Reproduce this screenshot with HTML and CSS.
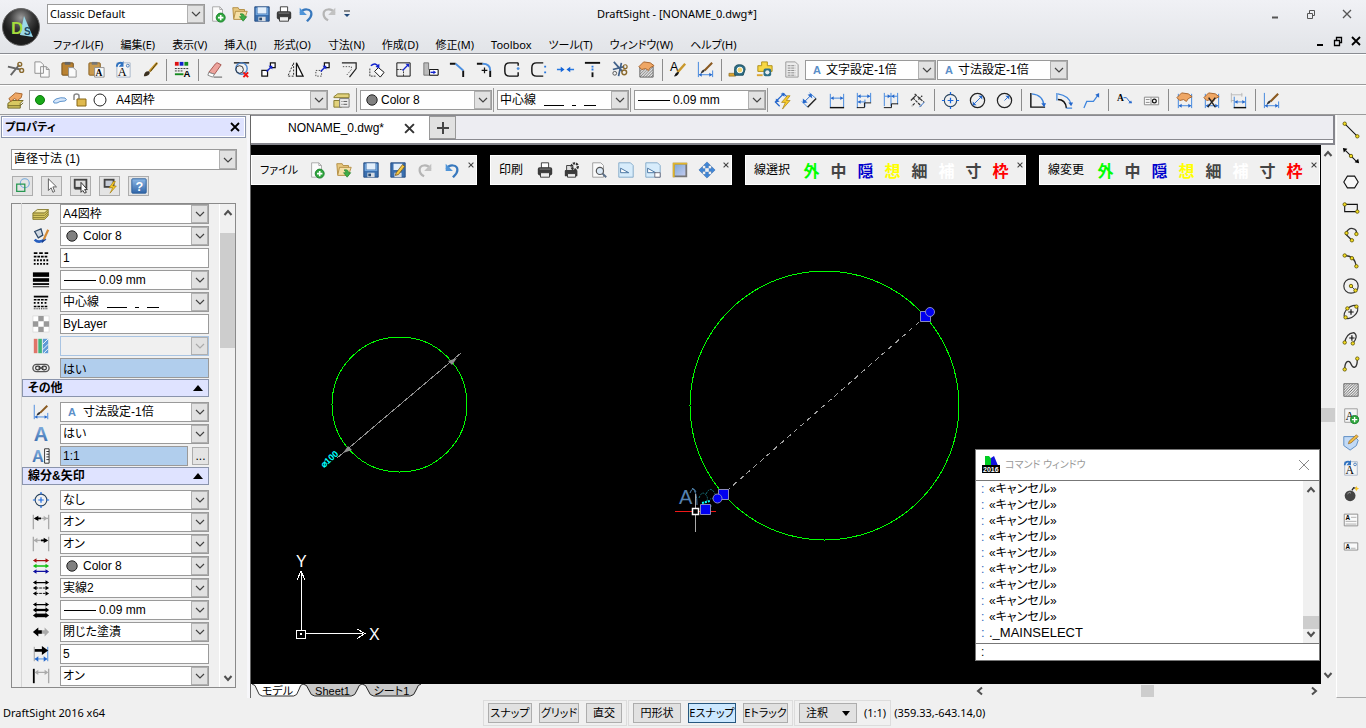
FILE: index.html
```html
<!DOCTYPE html>
<html lang="ja">
<head>
<meta charset="utf-8">
<title>DraftSight</title>
<link rel="stylesheet" href="styles.css">
</head>
<body>
<svg class="defs" aria-hidden="true">
<defs>
<linearGradient id="g-blue" x2="0" y2="1"><stop stop-color="#8db8e6"/><stop offset="1" stop-color="#3065a8"/></linearGradient>
<linearGradient id="g-steel" x2="1" y2="1"><stop stop-color="#7ba6d6"/><stop offset="1" stop-color="#c6cdf0"/></linearGradient>
<radialGradient id="g-orb" cy=".25"><stop stop-color="#9a9a9a"/><stop offset=".6" stop-color="#3c3c3c"/><stop offset="1" stop-color="#1c1c1c"/></radialGradient>
<pattern id="p-hatch" width="3" height="3" patternUnits="userSpaceOnUse"><path d="M0 3L3 0" stroke="#333" stroke-width=".8"/></pattern>
</defs>
<symbol id="chev" viewBox="0 0 10 10"><path d="M1 3l4 4 4-4" fill="none" stroke="currentColor" stroke-width="1.2"/></symbol>
<symbol id="chevb" viewBox="0 0 10 10"><path d="M1.500 3l3.500 4 3.500-4" fill="none" stroke="#505050" stroke-width="2"/></symbol>
<symbol id="x" viewBox="0 0 10 10"><path d="M1 1l8 8M9 1L1 9" fill="none" stroke="currentColor" stroke-width="1.800"/></symbol>
<symbol id="new" viewBox="0 0 20 20"><path d="M4 2h8l3 3v13H4z" fill="#fbfbfb" stroke="#a5a5a5"/><path d="M12 2v3h3" fill="none" stroke="#a5a5a5"/><circle cx="13" cy="14" r="5" fill="#2fa63c" stroke="#16802a"/><path d="M10 14h6M13 11v6" stroke="#fff" stroke-width="1.800"/></symbol>
<symbol id="open" viewBox="0 0 20 20"><path d="M2 3h6l1 2h6v10H3z" fill="#e8c981" stroke="#b08a3e"/><path d="M5 7h13l-3 9H3z" fill="#f5dfa6" stroke="#b08a3e"/><path d="M10 10c4-1 5 1 5 3h2.500l-4 5-4-5H12c0-1-1-2-2-3z" fill="#3fae48" stroke="#1c7d28" stroke-width=".7"/></symbol>
<symbol id="save" viewBox="0 0 20 20"><path d="M2 2h16v16H2z" fill="#3a6fae" stroke="#224a80"/><path d="M5 2.500h10v7H5z" fill="#e3effb"/><path d="M3 3h1.500v7h11V3H17v8H3z" fill="#6fa3da"/><path d="M6 13h8v5H6z" fill="#d5dbe2"/><path d="M7 14h3v3H7z" fill="#27486f"/></symbol>
<symbol id="saveas" viewBox="0 0 20 20"><path d="M2 2h16v16H2z" fill="#3a6fae" stroke="#224a80"/><path d="M5 3h10v7H5z" fill="#e3effb"/><path d="M6 13h8v5H6z" fill="#d5dbe2"/><path d="M7 16l1-3 7-9 2.500 2-7 9z" fill="#f2c744" stroke="#6b4a12" stroke-width=".8"/></symbol>
<symbol id="print" viewBox="0 0 20 20"><path d="M6 2h8v6H6z" fill="#fff" stroke="#333"/><rect x="2" y="7" width="16" height="9" rx="2" fill="#3b3b3b"/><path d="M5 13h10v5H5z" fill="#eee" stroke="#333"/><path d="M4 9h12" stroke="#888"/></symbol>
<symbol id="printset" viewBox="0 0 20 20"><path d="M4 5h7v6H4z" fill="#ddd" stroke="#333"/><rect x="2" y="10" width="14" height="7" rx="1" fill="#3b3b3b"/><path d="M5 14h9v4H5z" fill="#eee" stroke="#333"/><circle cx="13" cy="6" r="3.500" fill="none" stroke="#333" stroke-width="2.500" stroke-dasharray="2.500 1"/></symbol>
<symbol id="undo" viewBox="0 0 20 20"><path d="M4 9C7 3 16 4 16 10c0 4-3 6-5 8" fill="none" stroke="#3878bd" stroke-width="2.500"/><path d="M3 3v8h8z" fill="#4f94d8"/></symbol>
<symbol id="redo" viewBox="0 0 20 20"><path d="M16 9C13 3 4 4 4 10c0 4 3 6 5 7" fill="none" stroke="#b5b5b5" stroke-width="2.500"/><path d="M17 3v8H9z" fill="#c2c2c2"/></symbol>
<symbol id="cut" viewBox="0 0 20 20"><path d="M2 7l13 3M5 16L14 5" stroke="#666" stroke-width="2"/><circle cx="14.500" cy="4.500" r="2" fill="none" stroke="#8a6a2e" stroke-width="1.500"/><circle cx="16.500" cy="11" r="2" fill="none" stroke="#8a6a2e" stroke-width="1.500"/></symbol>
<symbol id="scissors" viewBox="0 0 20 20"><path d="M4 2l9 10M3 10l12-3M9 17L12 3" stroke="#41618a" stroke-width="1.800"/><circle cx="15" cy="13" r="2.500" fill="none" stroke="#8a6a2e" stroke-width="1.500"/><circle cx="16" cy="7" r="2" fill="none" stroke="#8a6a2e" stroke-width="1.300"/><circle cx="5" cy="14" r="2" fill="none" stroke="#555"/></symbol>
<symbol id="copy" viewBox="0 0 20 20"><path d="M2 2h6l3 3v9H2zM8 7h6l3 3v8H8z" fill="#fafafa" stroke="#8f8f8f"/><path d="M14 7v3h3" fill="none" stroke="#8f8f8f"/></symbol>
<symbol id="paste" viewBox="0 0 20 20"><rect x="2" y="3" width="12" height="13" rx="1" fill="#b98232" stroke="#75501b"/><path d="M5 2h6v3H5z" fill="#666"/><path d="M9 8h5l3 3v7H9z" fill="#fafafa" stroke="#8f8f8f"/></symbol>
<symbol id="pastea" viewBox="0 0 20 20"><rect x="2" y="3" width="12" height="13" rx="1" fill="#c99a4e" stroke="#8a6224"/><path d="M5 2h6v3H5z" fill="#777"/><path d="M8 8h10v10H8z" fill="#fafafa" stroke="#8f8f8f"/><text x="9" y="17" font-family="Liberation Serif" font-weight="bold" font-size="10">A</text></symbol>
<symbol id="atext" viewBox="0 0 20 20"><path d="M3 3h14v15H3z" fill="#f5f5f5" stroke="#a8b6c8"/><text x="4" y="17" font-family="Liberation Serif" font-size="13">A</text><circle cx="14.500" cy="6" r="1.500" fill="none" stroke="#4479b8"/><path d="M3 7c0-4 4-5 6-3" fill="none" stroke="#2f72c0" stroke-width="2"/><path d="M10 1v6H5z" fill="#2f72c0"/></symbol>
<symbol id="aplus" viewBox="0 0 20 20"><path d="M3 2h14v15H3z" fill="#f5f5f5" stroke="#999"/><text x="4" y="14" font-family="Liberation Serif" font-size="13">A</text><circle cx="14" cy="14" r="4.500" fill="#2fa63c" stroke="#16802a"/><path d="M11 14h6M14 11v6" stroke="#fff" stroke-width="1.500"/></symbol>
<symbol id="brush" viewBox="0 0 20 20"><path d="M17 3L9 12" stroke="#c9982b" stroke-width="2.500"/><path d="M17 3L10 12" stroke="#443510" stroke-width="1"/><path d="M3 17c0-4 3-6 6-5 1 3-2 5-6 5z" fill="#3a3020"/></symbol>
<symbol id="palette" viewBox="0 0 20 20"><path d="M2 2h4v4H2z" fill="#d11"/><path d="M7 2h4v4H7z" fill="#12c"/><path d="M12 2h4v4h-4z" fill="#138a1e"/><path d="M2 9h15M2 11.500h9" stroke="#333" stroke-dasharray="2 1"/><path d="M2 15h9" stroke="#138a1e" stroke-width="2"/><text x="11" y="18" font-family="Liberation Sans" font-weight="bold" font-size="10">A</text></symbol>
<symbol id="eraser" viewBox="0 0 20 20"><path d="M4 13L11 4q1-1 2-1l4 2-7 10z" fill="#eda39c" stroke="#a5564f"/><path d="M4 13l6 2-2 3-5-2z" fill="#fff" stroke="#888"/><path d="M9 18h9" stroke="#555"/></symbol>
<symbol id="trimx" viewBox="0 0 20 20"><path d="M2 3h16" stroke="#222" stroke-width="1.500"/><circle cx="10" cy="9" r="6" fill="none" stroke="#4b86d0" stroke-width="1.500"/><circle cx="8" cy="10" r="4" fill="none" stroke="#333"/><path d="M12 13l5 5M17 13l-5 5" stroke="#e11" stroke-width="2"/></symbol>
<symbol id="cpent" viewBox="0 0 20 20"><path d="M3 11h6v6H3zM12 3h5v5h-5z" fill="#fff" stroke="#111" stroke-width="1.300"/><path d="M8 12l5-5" stroke="#12c" stroke-width="1.500"/><path d="M14 6v4l-4-4z" fill="#12c"/></symbol>
<symbol id="mirror" viewBox="0 0 20 20"><path d="M8 3v14H2z" fill="none" stroke="#222" stroke-dasharray="2 1.500"/><path d="M11 3v14h7z" fill="#fff" stroke="#111" stroke-width="1.300"/></symbol>
<symbol id="move" viewBox="0 0 20 20"><path d="M3 11h6v6H3z" fill="none" stroke="#444" stroke-dasharray="1.500 1.500"/><path d="M12 3h5v5h-5z" fill="#fff" stroke="#111" stroke-width="1.300"/><path d="M8 12l5-5" stroke="#12c" stroke-width="1.500"/><path d="M14 6v4l-4-4z" fill="#12c"/></symbol>
<symbol id="offset" viewBox="0 0 20 20"><path d="M2 3h15v6l-7 9" fill="none" stroke="#222" stroke-width="1.300"/><path d="M3 7h9v3l-5 6" fill="none" stroke="#555" stroke-dasharray="1.500 1.500"/></symbol>
<symbol id="rotate" viewBox="0 0 20 20"><path d="M3 9v8h7" fill="none" stroke="#333" stroke-dasharray="2 1"/><path d="M8 12l4-4 6 5-4 5z" fill="#fff" stroke="#111"/><path d="M4 6q5-4 8 1" fill="none" stroke="#12c" stroke-width="1.500"/><path d="M13 9V4l-4 3z" fill="#12c"/></symbol>
<symbol id="scale" viewBox="0 0 20 20"><path d="M3 3h14v14H3z" fill="none" stroke="#111"/><path d="M3 10h7v7" fill="none" stroke="#333" stroke-dasharray="2 1"/><path d="M9 11l6-6" stroke="#12c" stroke-width="1.300"/><path d="M16 4v4l-4-4z" fill="#12c"/></symbol>
<symbol id="stretch" viewBox="0 0 20 20"><path d="M3 3h5v7h10v6H3z" fill="#bbb" stroke="#777"/><path d="M9 10h9v6H9z" fill="#fff" stroke="#111"/><path d="M10 13h4" stroke="#12c" stroke-width="1.500"/><path d="M13 11l3 2-3 2z" fill="#12c"/></symbol>
<symbol id="chamfer" viewBox="0 0 20 20"><path d="M2 4h6M16 11v7" stroke="#111" stroke-width="2"/><path d="M8 4l8 7" stroke="#4b8fe0" stroke-width="2"/></symbol>
<symbol id="fillet" viewBox="0 0 20 20"><path d="M2 4h6M16 11v7" stroke="#111" stroke-width="2"/><path d="M8 4q8 0 8 7" fill="none" stroke="#4b8fe0" stroke-width="2"/><path d="M7 11h6M10 8v6" stroke="#111" stroke-width="1.300"/></symbol>
<symbol id="split1" viewBox="0 0 20 20"><path d="M17 3H8Q3 3 3 8v4q0 5 5 5h9M17 13v4M17 3v3" fill="none" stroke="#111" stroke-width="1.500"/><circle cx="17" cy="9" r="1.500" fill="#4b8fe0"/></symbol>
<symbol id="split2" viewBox="0 0 20 20"><path d="M15 3H8Q3 3 3 8v4q0 5 5 5h7" fill="none" stroke="#111" stroke-width="1.500"/><path d="M16 6h2v2h-2zM16 12h2v2h-2z" fill="#2879e0"/></symbol>
<symbol id="join" viewBox="0 0 20 20"><path d="M1 10h5M14 10h5" stroke="#2879e0" stroke-width="1.500"/><path d="M5 7l4 3-4 3zM15 7l-4 3 4 3z" fill="#1465d8"/></symbol>
<symbol id="extend" viewBox="0 0 20 20"><path d="M2 3h16" stroke="#111" stroke-width="2"/><path d="M10 6v6" stroke="#2879e0" stroke-width="2" stroke-dasharray="2 1"/><path d="M10 13v5" stroke="#111" stroke-width="2"/></symbol>
<symbol id="hand" viewBox="0 0 20 20"><path d="M2 7l5-5 7 1 4 3-4 2-2 3-3-2-4 1z" fill="#efa765" stroke="#a8642b"/></symbol>
<symbol id="hatched" viewBox="0 0 20 20"><path d="M3 7h14v11H3z" fill="url(#p-hatch)" stroke="#666"/><use href="#hand"/></symbol>
<symbol id="hatch" viewBox="0 0 20 20"><path d="M2 3h16v14H2z" fill="url(#p-hatch)" stroke="#666"/></symbol>
<symbol id="abrush" viewBox="0 0 20 20"><text x="1" y="12" font-family="Liberation Sans" font-size="13">A</text><path d="M17 4L9 13" stroke="#c9982b" stroke-width="2.500"/><path d="M6 17q1-4 4-4 0 3-4 4z" stroke="#222"/></symbol>
<symbol id="dimbrush" viewBox="0 0 20 20"><path d="M2.500 2v16M17.500 11v7M3 15.500h14" stroke="#3e85dd"/><path d="M3 15.500l3-2v4zM17 15.500l-3-2v4z" fill="#2668cc"/><path d="M17 3l-8 8" stroke="#8a5a20" stroke-width="2.200"/><path d="M5 14q1-4 4-4 1 3-4 4z" fill="#333"/></symbol>
<symbol id="tape" viewBox="0 0 20 20"><path d="M1 14h7v3H1z" fill="#dca530" stroke="#7a5a10" stroke-width=".6"/><path d="M7 16V9q0-4 5-4 6 0 6 5l-2 6z" fill="#2e6f86" stroke="#1c4d60"/><circle cx="12.500" cy="10.500" r="3" fill="#f1d472" stroke="#fff"/></symbol>
<symbol id="tapey" viewBox="0 0 20 20"><path d="M7 2h6v4h5v6H3V6h4z" fill="#f7d744" stroke="#af8e17"/><path d="M2 15h6v2H2z" fill="#dca530"/><rect x="9" y="9" width="8" height="8" rx="2" fill="#2e6f86"/><circle cx="13" cy="13" r="2.200" fill="#e8edf0"/></symbol>
<symbol id="list" viewBox="0 0 20 20"><path d="M4 2h10l3 3v13H4z" fill="#ececec" stroke="#999"/><path d="M6 6h8M6 8.500h8M6 11h8M6 13.500h8M6 16h8" stroke="#888" stroke-dasharray="3 .7"/></symbol>
<symbol id="layers" viewBox="0 0 20 20"><path d="M1 9l5-4h12l-4 4z" fill="#f1e8a4" stroke="#857a2f"/><path d="M1 9h13l4-4v7l-4 4H1z" fill="#d8c861" stroke="#857a2f"/><path d="M1 11.500h13l4-4M1 14h13l4-4" fill="none" stroke="#857a2f"/></symbol>
<symbol id="layerhand" viewBox="0 0 20 20"><path d="M2 13l4-3h12l-3 3v5H2z" fill="#d8c861" stroke="#6f6524"/><path d="M2 15.500h13l3-3" fill="none" stroke="#6f6524"/><path d="M3 8l7-6 7 1-1 4-4 3-3-2-4 3z" fill="#efa765" stroke="#a8642b"/></symbol>
<symbol id="layerlist" viewBox="0 0 20 20"><path d="M2 6l4-3h12v4H2zM2 10h8v7H2z" fill="#e2d27c" stroke="#857a2f"/><path d="M8 8h10v9H8z" fill="#eee" stroke="#777"/><path d="M10 11h1M12 11h4M10 14h1M12 14h4" stroke="#555"/></symbol>
<symbol id="cloud" viewBox="0 0 16 16"><path d="M2 11q-2-2 2-4 5-2 9-1 3 2 0 3-6 0-8 2z" fill="#d5e6fa" stroke="#5f94cc"/></symbol>
<symbol id="lock" viewBox="0 0 16 16"><path d="M2 8V4q0-2 2.500-2T7 4v3" fill="none" stroke="#888" stroke-width="1.500"/><path d="M5 7h9v7H5z" fill="#dfb94e" stroke="#876616"/></symbol>
<symbol id="dimfast" viewBox="0 0 20 20"><path d="M2 11l5 5M10 2l6 5M3 11L11 3" stroke="#2668cc" stroke-width="1.300" fill="none"/><path d="M12 2l0 4-4-3zM3 12V8l4 3z" fill="#2668cc"/><path d="M15 5l-6 7h4l-3 7 8-9h-4l4-5z" fill="#f8cc2c" stroke="#a37a0a" stroke-width=".7"/></symbol>
<symbol id="dimal" viewBox="0 0 20 20"><path d="M2 11l6 6M10 2l7 6" stroke="#3e85dd"/><path d="M4 12l8-8" stroke="#2668cc"/><path d="M12 3l1 5-5-4zM3 13V8l5 4z" fill="#2668cc"/><path d="M8 17l9-9" stroke="#222" stroke-width="1.500"/></symbol>
<symbol id="dimlin" viewBox="0 0 20 20"><path d="M3.500 3v14M17.500 3v14M4 7.500h13" stroke="#3e85dd"/><path d="M4 7.500l3-2v4zM17 7.500l-3-2v4z" fill="#2668cc"/><path d="M3 17.500h15" stroke="#111" stroke-width="1.500"/></symbol>
<symbol id="dimbase" viewBox="0 0 20 20"><path d="M3.500 2v16M17.500 2v10M11.500 9v8M4 5.500h13M4 11.500h7" stroke="#3e85dd"/><path d="M4 5.500l3-2v4zM17 5.500l-3-2v4zM4 11.500l3-2v4z" fill="#2668cc"/><path d="M3 17.500h8v-5h7" fill="none" stroke="#111"/></symbol>
<symbol id="dimcont" viewBox="0 0 20 20"><path d="M3.500 2v14M10.500 2v14M17.500 2v12M4 5.500h13" stroke="#3e85dd"/><path d="M10 5.500l-3-2v4zM11 5.500l3-2v4z" fill="#2668cc"/><path d="M3 17.500h8v-4h7" fill="none" stroke="#111"/></symbol>
<symbol id="dimord" viewBox="0 0 20 20"><path d="M3 10l6-6M7 3l10 9M5 7l9 9M11 9l4-4M7 13l-3 3" stroke="#333" stroke-width="1.300" stroke-dasharray="3 1"/><path d="M12 17l5-5" stroke="#2668cc"/></symbol>
<symbol id="center" viewBox="0 0 20 20"><circle cx="10" cy="10" r="6.500" fill="none" stroke="#29445f" stroke-width="1.200"/><path d="M7 10h6M10 7v6M1 10h3M16 10h3M10 1v3M10 16v3" stroke="#1868e0" stroke-width="1.300"/></symbol>
<symbol id="dimdia" viewBox="0 0 20 20"><circle cx="10" cy="10" r="7.500" fill="none" stroke="#222" stroke-width="1.300"/><path d="M5 15L15 5" stroke="#2668cc"/><path d="M15 5v4l-4-4zM5 15v-4l4 4z" fill="#2668cc"/></symbol>
<symbol id="dimrad" viewBox="0 0 20 20"><circle cx="10" cy="10" r="7.500" fill="none" stroke="#222" stroke-width="1.300"/><path d="M10 10l5-5" stroke="#2668cc"/><path d="M15 5v4l-4-4z" fill="#2668cc"/></symbol>
<symbol id="dimang" viewBox="0 0 20 20"><path d="M3 2v15h15" fill="none" stroke="#111" stroke-width="1.500"/><path d="M4 3q12 1 13 13" fill="none" stroke="#3e85dd" stroke-width="1.400"/><path d="M17 17l-3-4h5z" fill="#2668cc"/></symbol>
<symbol id="dimarc" viewBox="0 0 20 20"><path d="M3 9q8 0 9 9" fill="none" stroke="#111" stroke-width="1.500"/><path d="M3 3q12 2 14 11M2 2v8M12 18h6" fill="none" stroke="#3e85dd" stroke-width="1.300"/><path d="M17 16l-3-4h5z" fill="#2668cc"/></symbol>
<symbol id="dimjog" viewBox="0 0 20 20"><path d="M2 18l3-7h7l5-7" fill="none" stroke="#3e85dd" stroke-width="1.300"/><path d="M18 2v5l-4-3z" fill="#2668cc"/></symbol>
<symbol id="leader" viewBox="0 0 20 20"><text x="2" y="11" font-family="Liberation Serif" font-weight="bold" font-size="10">A</text><path d="M9 7h3l4 5" fill="none" stroke="#2668cc"/><path d="M18 13l-4 0 3-3z" fill="#2668cc"/></symbol>
<symbol id="tol" viewBox="0 0 20 20"><path d="M2.500 6.500h15v8h-15z" fill="#fafafa" stroke="#888"/><path d="M4 9h4M4 12h4M9.500 7v7" stroke="#888"/><circle cx="13" cy="10.500" r="2" fill="none" stroke="#111" stroke-width="1.300"/></symbol>
<symbol id="dimhand" viewBox="0 0 20 20"><path d="M3.500 3v15M17.500 3v15M4 15.500h13" stroke="#3e85dd"/><path d="M4 15.500l3-2v4zM17 15.500l-3-2v4z" fill="#2668cc"/><use href="#hand"/></symbol>
<symbol id="dimhandx" viewBox="0 0 20 20"><use href="#dimhand"/><path d="M7 7l7 10M14 7L6 17" stroke="#222" stroke-width="1.500"/></symbol>
<symbol id="dimobl" viewBox="0 0 20 20"><path d="M2.500 2v10M13.500 2v4M2 4h12M2 10h4" stroke="#bbb"/><path d="M5.500 6v12M17.500 6v12M6 11.500h11" stroke="#3e85dd"/><path d="M6 11.500l3-2v4zM17 11.500l-3-2v4z" fill="#2668cc"/><path d="M5 17.500h13" stroke="#111" stroke-width="1.500"/></symbol>
<symbol id="preview" viewBox="0 0 20 20"><path d="M3 2h9l3 3v13H3z" fill="#fafafa" stroke="#999"/><circle cx="11" cy="11" r="4" fill="#dbe9f6" stroke="#555" stroke-width="1.300"/><path d="M14 14l4 4" stroke="#5a6f88" stroke-width="2.200"/></symbol>
<symbol id="sheet" viewBox="0 0 20 20"><path d="M2 2h13l3 3v13H2z" fill="#d7ecfb" stroke="#7fa7c7"/><path d="M4 8v5h9z" fill="#fff" stroke="#3b6a9a"/></symbol>
<symbol id="sheet2" viewBox="0 0 20 20"><use href="#sheet"/><path d="M12 13h6v5h-6z" fill="#fff" stroke="#667"/></symbol>
<symbol id="frame" viewBox="0 0 20 20"><path d="M3 3h14v14H3z" fill="url(#g-steel)" stroke="#777" stroke-width="2"/><path d="M3 18V3h15" fill="none" stroke="#e2b62a" stroke-width="2"/></symbol>
<symbol id="pan" viewBox="0 0 20 20"><path d="M10 1l4 4h-2.500v3.500H15V6l4 4-4 4v-2.500h-3.500V15H14l-4 4-4-4h2.500v-3.500H5V14l-4-4 4-4v2.500h3.500V5H6z" fill="#3f87d8" stroke="#21589c" stroke-width=".5"/><path d="M8 8h4v4H8z" fill="#f0f0f0"/></symbol>
<symbol id="shapes" viewBox="0 0 20 20"><circle cx="12" cy="7" r="5" fill="none" stroke="#73a9dd" stroke-width="1.200"/><path d="M3 8h9v8H3z" fill="none" stroke="#279751" stroke-width="1.400"/></symbol>
<symbol id="cursor" viewBox="0 0 20 20"><path d="M6 2v13l3-3 2 5 2-1-2-5h4z" fill="#fff" stroke="#555"/></symbol>
<symbol id="selset" viewBox="0 0 20 20"><rect x="3" y="3" width="13" height="9" fill="#ddd" stroke="#444" stroke-width="2"/><path d="M3 13h7" stroke="#444" stroke-width="2"/><path d="M10 6v11l2-2 2 3 2-1-2-3h3z" fill="#fff" stroke="#222"/></symbol>
<symbol id="selfast" viewBox="0 0 20 20"><rect x="4" y="3" width="10" height="8" fill="#c5cbd6" stroke="#444" stroke-width="2"/><path d="M14 5l-5 7h4l-3 6 7-8h-4l3-5z" fill="#f8cc2c" stroke="#a37a0a" stroke-width=".7"/></symbol>
<symbol id="help" viewBox="0 0 20 20"><rect x="2" y="2" width="16" height="16" rx="1" fill="url(#g-blue)" stroke="#2b5e9a"/><text x="6" y="15" fill="#fff" font-family="Liberation Sans" font-weight="bold" font-size="14">?</text></symbol>
<symbol id="paint" viewBox="0 0 20 20"><path d="M3 5l7-3 2 7-5 3z" fill="#cfd8e2" stroke="#2f4968" stroke-width="1.400"/><path d="M3 14q5 5 12-1" fill="none" stroke="#265ebf" stroke-width="3"/><path d="M18 3l-5 11" stroke="#d58b36" stroke-width="2.500"/><path d="M11 15l4-1-4 4z" fill="#183e8c"/></symbol>
<symbol id="ltscale" viewBox="0 0 20 20"><path d="M2 4.500h16" stroke="#000" stroke-width="2" stroke-dasharray="4 2"/><path d="M2 8.500h16" stroke="#000" stroke-width="2" stroke-dasharray="3 1"/><path d="M2 12.500h16M2 16.500h16" stroke="#000" stroke-width="2" stroke-dasharray="2 1.500"/></symbol>
<symbol id="weight" viewBox="0 0 20 20"><path d="M1 4h18" stroke="#000" stroke-width="5"/><path d="M1 10h18" stroke="#000" stroke-width="4"/><path d="M1 14.500h18" stroke="#000" stroke-width="2"/><path d="M1 17.500h18" stroke="#000"/></symbol>
<symbol id="ltype" viewBox="0 0 20 20"><path d="M2 4h16" stroke="#000" stroke-width="2"/><path d="M2 7.500h16M2 15h16" stroke="#000" stroke-width="1.500" stroke-dasharray="3 1"/><path d="M2 11h16" stroke="#000" stroke-width="2" stroke-dasharray="2 2"/><path d="M2 17.500h16" stroke="#000" stroke-dasharray="1 1"/></symbol>
<symbol id="checker" viewBox="0 0 20 20"><path d="M1 1h18v18H1z" fill="#fff" stroke="#ddd"/><path d="M7 1h6v6H7zM1 7h6v6H1zM13 7h6v6h-6zM7 13h6v6H7z" fill="#999"/></symbol>
<symbol id="bars" viewBox="0 0 20 20"><path d="M2 2h4v16H2z" fill="#e07569"/><path d="M7 2h4v16H7z" fill="#42b57a"/><path d="M12 2h6v16h-6z" fill="#5f9cd7"/><path d="M12 8l6-6M12 14l6-6M13 18l5-5" stroke="#fff"/></symbol>
<symbol id="link" viewBox="0 0 20 20"><rect x="1" y="6" width="18" height="8" rx="4" fill="#eee" stroke="#555" stroke-width="1.500"/><rect x="4" y="8" width="5" height="4" rx="2" fill="none" stroke="#333" stroke-width="1.300"/><rect x="11" y="8" width="5" height="4" rx="2" fill="none" stroke="#333" stroke-width="1.300"/><path d="M7 10h6" stroke="#333" stroke-width="1.300"/></symbol>
<symbol id="biga" viewBox="0 0 20 20"><text x="2" y="18" fill="url(#g-blue)" font-family="Liberation Sans" font-weight="bold" font-size="22">A</text></symbol>
<symbol id="aruler" viewBox="0 0 20 20"><text x="0" y="17" fill="url(#g-blue)" font-family="Liberation Sans" font-weight="bold" font-size="18">A</text><path d="M14 2h5v16h-5z" fill="#fff" stroke="#222"/><path d="M16 5h3M16 8h3M16 11h3M16 14h3" stroke="#222"/></symbol>
<symbol id="dl1" viewBox="0 0 20 20"><path d="M1.500 2v16M18.500 2v16" stroke="#aaa" stroke-width="1.500"/><path d="M10 6h8" stroke="#aaa" stroke-width="1.500"/><path d="M17 6l-4-3v6z" fill="#aaa"/><path d="M4 6h6" stroke="#000" stroke-width="2"/><path d="M2 6l5-3v6z"/></symbol>
<symbol id="dl2" viewBox="0 0 20 20"><path d="M1.500 2v16M18.500 2v16" stroke="#aaa" stroke-width="1.500"/><path d="M2 6h8" stroke="#aaa" stroke-width="1.500"/><path d="M2 6l4-3v6z" fill="#aaa"/><path d="M10 6h6" stroke="#000" stroke-width="2"/><path d="M18 6l-5-3v6z"/></symbol>
<symbol id="arrows" viewBox="0 0 20 6"><path d="M3 3h14" stroke="currentColor" stroke-width="1.500"/><path d="M1 3l4-2.500v5zM19 3l-4-2.500v5z" fill="currentColor"/></symbol>
<symbol id="arcol" viewBox="0 0 20 20"><use href="#arrows" width="20" height="6" y="1" color="#a01010"/><use href="#arrows" width="20" height="6" y="7" color="#10c010"/><use href="#arrows" width="20" height="6" y="13" color="#1010a0"/></symbol>
<symbol id="artype" viewBox="0 0 20 20"><use href="#arrows" width="20" height="6" y="1"/><path d="M4 10h12M4 16h12" stroke="#000" stroke-dasharray="3 1"/><path d="M1 10l4-2.500v5zM19 10l-4-2.500v5zM1 16l4-2.500v5zM19 16l-4-2.500v5z"/></symbol>
<symbol id="arw" viewBox="0 0 20 20"><use href="#arrows" width="20" height="6" y="1"/><path d="M4 10h12" stroke="#000" stroke-width="2.500"/><path d="M4 16h12" stroke="#000" stroke-width="4"/><path d="M1 10l4-3v6zM19 10l-4-3v6zM1 16l4-3v6zM19 16l-4-3v6z"/></symbol>
<symbol id="arhead" viewBox="0 0 20 20"><path d="M1 10l6-5v3h4v4H7v3z"/><path d="M19 10l-5-5v3h-3v4h3v3z" fill="#aaa"/></symbol>
<symbol id="arsize" viewBox="0 0 20 20"><path d="M2.500 2v16" stroke="#999"/><path d="M17.500 2v16M3 15.500h14" stroke="#3e85dd"/><path d="M3 6h9" stroke="#000" stroke-width="3"/><path d="M18 6l-7-5v10z"/><path d="M3 15.500l4-3v6zM17 15.500l-4-3v6z" fill="#2668cc"/></symbol>
<symbol id="dl3" viewBox="0 0 20 20"><path d="M2 2v16" stroke="#000" stroke-width="2"/><path d="M18.500 2v16M4 6h13" stroke="#aaa" stroke-width="1.500"/><path d="M3 6l4-3v6zM18 6l-4-3v6z" fill="#aaa"/></symbol>
<symbol id="n" viewBox="0 0 4 4" overflow="visible"><circle cx="2" cy="2" r="1.900" fill="#f4dd23" stroke="#5c5200" stroke-width=".9"/></symbol>
<symbol id="line" viewBox="0 0 20 20"><path d="M4 4l12 12" stroke="#111" stroke-width="1.200"/><use href="#n" x="1" y="1" width="4" height="4"/><use href="#n" x="15" y="15" width="4" height="4"/></symbol>
<symbol id="xline" viewBox="0 0 20 20"><path d="M4 4l12 12" stroke="#111" stroke-width="1.200"/><path d="M1 1l5 1-4 4zM19 18l-5-1 4-4z"/><use href="#n" x="8" y="8" width="4" height="4"/></symbol>
<symbol id="poly" viewBox="0 0 20 20"><path d="M6 3.500h8l4 6.500-4 6.500H6L2 10z" fill="#fff" fill-opacity=".5" stroke="#111" stroke-width="1.200"/></symbol>
<symbol id="rect" viewBox="0 0 20 20"><path d="M3 6h14v8H3z" fill="none" stroke="#111" stroke-width="1.200"/><use href="#n" x="1" y="4" width="4" height="4"/><use href="#n" x="15" y="12" width="4" height="4"/></symbol>
<symbol id="pline" viewBox="0 0 20 20"><path d="M11 17l-7-7q3-7 8-6 5 1 4 6" fill="none" stroke="#333" stroke-width="1.400"/><use href="#n" x="9" y="15" width="4" height="4"/><use href="#n" x="3" y="7" width="4" height="4"/><use href="#n" x="14" y="8" width="4" height="4"/></symbol>
<symbol id="arc" viewBox="0 0 20 20"><path d="M3 5q11 0 13 12" fill="none" stroke="#333" stroke-width="1.400"/><use href="#n" x="1" y="3" width="4" height="4"/><use href="#n" x="9" y="6" width="4" height="4"/><use href="#n" x="14" y="15" width="4" height="4"/></symbol>
<symbol id="circ" viewBox="0 0 20 20"><circle cx="10" cy="10" r="8" fill="none" stroke="#333" stroke-width="1.300"/><path d="M10 10l5 5" stroke="#333"/><use href="#n" x="8" y="8" width="4" height="4"/><use href="#n" x="13" y="13" width="4" height="4"/></symbol>
<symbol id="ellip" viewBox="0 0 20 20"><ellipse cx="10" cy="10" rx="9" ry="5.500" transform="rotate(-42 10 10)" fill="none" stroke="#333" stroke-width="1.300"/><path d="M7 10h6M10 7v6" stroke="#111" stroke-width="1.300"/><use href="#n" x="14" y="2" width="4" height="4"/><use href="#n" x="2" y="14" width="4" height="4"/><use href="#n" x="4" y="4" width="4" height="4"/></symbol>
<symbol id="earc" viewBox="0 0 20 20"><path d="M3 16Q4 5 13 4q6 4-1 12" fill="none" stroke="#333" stroke-width="1.300"/><path d="M8 10h6M11 7v6" stroke="#111" stroke-width="1.300"/><use href="#n" x="1" y="13" width="4" height="4"/><use href="#n" x="10" y="14" width="4" height="4"/></symbol>
<symbol id="spline" viewBox="0 0 20 20"><path d="M3 16C3 6 8 5 10 10s7 6 7-5" fill="none" stroke="#333" stroke-width="1.500"/><use href="#n" x="1" y="14" width="4" height="4"/><use href="#n" x="15" y="2" width="4" height="4"/></symbol>
<symbol id="note" viewBox="0 0 20 20"><path d="M2 4h12l4 4-2 6-7 5-7-5z" fill="#c2daf6" stroke="#5386bf"/><path d="M7 12l1-3 8-7 2 2-8 7z" fill="#f0bd42" stroke="#8a5a20" stroke-width=".7"/></symbol>
<symbol id="bomb" viewBox="0 0 20 20"><circle cx="9" cy="12" r="6" fill="#444"/><path d="M6 10q2-3 4-1" stroke="#aaa" fill="none"/><path d="M11 6l2-3 3 1" fill="none" stroke="#222" stroke-width="1.500"/><path d="M16 1l1 2 2 1-2 1-1 2-1-2-1-1 1-1z" fill="#f8c62a"/></symbol>
<symbol id="mtext" viewBox="0 0 20 20"><path d="M2.500 3.500h15v13h-15z" fill="#fafafa" stroke="#888"/><text x="4" y="10" font-family="Liberation Sans" font-weight="bold" font-size="7">A</text><path d="M10 7h6M4 11.500h12M4 14.500h12" stroke="#aaa"/></symbol>
<symbol id="stext" viewBox="0 0 20 20"><path d="M2.500 6.500h15v8h-15z" fill="#fafafa" stroke="#888"/><text x="4" y="13" font-family="Liberation Sans" font-weight="bold" font-size="7">A</text><path d="M10 12.500h5" stroke="#aaa"/></symbol>
<symbol id="dash" viewBox="0 0 52 4"><path d="M0 2.500h20M28 2.500h4M40 2.500h12" stroke="#000"/></symbol>
<symbol id="solid" viewBox="0 0 32 4"><path d="M0 2.500h32" stroke="#000"/></symbol>
<symbol id="grey" viewBox="0 0 12 12"><circle cx="6" cy="6" r="5.200" fill="#808080" stroke="#222"/></symbol>
<symbol id="sa" viewBox="0 0 12 12"><text x="2" y="10" fill="#5b8fc8" font-family="Liberation Sans" font-weight="bold" font-size="11">A</text></symbol>
</svg>

<div class="app">
<header class="head">
  <button class="orb" aria-label="DraftSight"><svg viewBox="0 0 38 38"><circle cx="19" cy="19" r="18.500" fill="url(#g-orb)" stroke="#666"/><path d="M22 8l9 21-13-2z" fill="#9ad8e8"/><text x="9" y="26" fill="#a6dc3c" font-family="Liberation Sans" font-weight="bold" font-size="17">D</text><text x="22" y="27" fill="#1d4a63" font-family="Liberation Sans" font-weight="bold" font-size="10">S</text></svg></button>
  <div class="headmain">
    <div class="titlebar">
      <div class="combo workspace"><select aria-label="Workspace"><option>Classic Default</option></select><span class="drop"><svg><use href="#chev"/></svg></span></div>
      <div class="quick">
        <button aria-label="新規"><svg><use href="#new"/></svg></button><button aria-label="開く"><svg><use href="#open"/></svg></button><button aria-label="保存"><svg><use href="#save"/></svg></button><button aria-label="印刷"><svg><use href="#print"/></svg></button><button aria-label="元に戻す"><svg><use href="#undo"/></svg></button><button aria-label="やり直し"><svg><use href="#redo"/></svg></button>
        <button class="more" aria-label="その他"><svg viewBox="0 0 8 10"><path d="M1 2h6" stroke="#222"/><path d="M1 5h6L4 8z" fill="#234a7a"/></svg></button>
      </div>
      <h1>DraftSight - [NONAME_0.dwg*]</h1>
      <div class="winbtns"><button aria-label="最小化"><svg viewBox="0 0 12 12"><path d="M3 9.500h6" stroke="#555" stroke-width="2"/></svg></button><button aria-label="元のサイズ"><svg viewBox="0 0 12 12"><path d="M2.500 5.500h5v5h-5zM4.500 5V2.500h5v5H8" fill="none" stroke="#555"/></svg></button><button aria-label="閉じる"><svg viewBox="0 0 12 12"><path d="M2 2l8 8M10 2l-8 8" stroke="#555" stroke-width="1.300"/></svg></button></div>
    </div>
    <div class="menurow">
      <nav class="menu"><button>ファイル(F)</button><button>編集(E)</button><button>表示(V)</button><button>挿入(I)</button><button>形式(O)</button><button>寸法(N)</button><button>作成(D)</button><button>修正(M)</button><button>Toolbox</button><button>ツール(T)</button><button>ウィンドウ(W)</button><button>ヘルプ(H)</button></nav>
      <div class="docbtns"><button aria-label="最小化"><svg viewBox="0 0 12 12"><path d="M3 10h6" stroke="#000" stroke-width="2"/></svg></button><button aria-label="元のサイズ"><svg viewBox="0 0 12 12"><path d="M2.500 5.500h5v5h-5zM4.500 5V2.500h5v5H8" fill="none" stroke="#000" stroke-width="1.300"/></svg></button><button aria-label="閉じる"><svg viewBox="0 0 12 12"><path d="M2 2l8 8M10 2l-8 8" stroke="#000" stroke-width="1.800"/></svg></button></div>
    </div>
  </div>
</header>

<div class="bar">
  <div class="icons"><button aria-label="切り取り"><svg><use href="#cut"/></svg></button><button aria-label="コピー"><svg><use href="#copy"/></svg></button><button aria-label="貼り付け"><svg><use href="#paste"/></svg></button><button aria-label="形式を選択して貼り付け"><svg><use href="#pastea"/></svg></button><button aria-label="注釈"><svg><use href="#atext"/></svg></button><button aria-label="プロパティ ペインタ"><svg><use href="#brush"/></svg></button><i></i><button aria-label="プロパティ"><svg><use href="#palette"/></svg></button><i></i><button aria-label="削除"><svg><use href="#eraser"/></svg></button><button aria-label="重複削除"><svg><use href="#trimx"/></svg></button><button aria-label="図形コピー"><svg><use href="#cpent"/></svg></button><button aria-label="鏡像"><svg><use href="#mirror"/></svg></button><button aria-label="移動"><svg><use href="#move"/></svg></button><button aria-label="オフセット"><svg><use href="#offset"/></svg></button><button aria-label="回転"><svg><use href="#rotate"/></svg></button><button aria-label="尺度"><svg><use href="#scale"/></svg></button><button aria-label="ストレッチ"><svg><use href="#stretch"/></svg></button><button aria-label="面取り"><svg><use href="#chamfer"/></svg></button><button aria-label="フィレット"><svg><use href="#fillet"/></svg></button><button aria-label="点で分割"><svg><use href="#split1"/></svg></button><button aria-label="分割"><svg><use href="#split2"/></svg></button><button aria-label="結合"><svg><use href="#join"/></svg></button><button aria-label="延長"><svg><use href="#extend"/></svg></button><button aria-label="トリム"><svg><use href="#scissors"/></svg></button><button aria-label="ハッチング編集"><svg><use href="#hatched"/></svg></button><i></i><button aria-label="文字スタイル"><svg><use href="#abrush"/></svg></button><button aria-label="寸法スタイル"><svg><use href="#dimbrush"/></svg></button><i></i><button aria-label="計測"><svg><use href="#tape"/></svg></button><button aria-label="面積"><svg><use href="#tapey"/></svg></button><button aria-label="一覧"><svg><use href="#list"/></svg></button></div>
  <div class="combo style"><svg class="lead"><use href="#sa"/></svg><select class="p20" aria-label="文字スタイル"><option>文字設定-1倍</option></select><span class="drop"><svg><use href="#chev"/></svg></span></div>
  <div class="combo style"><svg class="lead"><use href="#sa"/></svg><select class="p20" aria-label="寸法スタイル"><option>寸法設定-1倍</option></select><span class="drop"><svg><use href="#chev"/></svg></span></div>
</div>

<div class="bar second">
  <div class="icons"><button aria-label="画層管理"><svg><use href="#layerhand"/></svg></button></div>
  <div class="combo layer"><span class="lead states"><svg viewBox="0 0 16 16"><circle cx="8" cy="8" r="4.500" fill="#18a818" stroke="#0b7a0b"/></svg><svg><use href="#cloud"/></svg><svg><use href="#lock"/></svg><svg viewBox="0 0 16 16"><circle cx="8" cy="8" r="6" fill="#fff" stroke="#222"/></svg></span><select class="p86" aria-label="画層"><option>A4図枠</option></select><span class="drop"><svg><use href="#chev"/></svg></span></div>
  <div class="icons"><button aria-label="画層状態"><svg><use href="#layerlist"/></svg></button></div>
  <i class="vsep"></i>
  <div class="combo prop"><svg class="lead"><use href="#grey"/></svg><select class="p20" aria-label="線色"><option>Color 8</option></select><span class="drop"><svg><use href="#chev"/></svg></span></div>
  <i class="vsep"></i>
  <div class="combo prop"><select aria-label="線種"><option>中心線</option></select><svg class="dash"><use href="#dash"/></svg><span class="drop"><svg><use href="#chev"/></svg></span></div>
  <i class="vsep"></i>
  <div class="combo prop"><svg class="lead solid"><use href="#solid"/></svg><select class="p38" aria-label="線の太さ"><option>0.09 mm</option></select><span class="drop"><svg><use href="#chev"/></svg></span></div>
  <i class="vsep thin"></i>
  <div class="icons dims"><button aria-label="スマート寸法"><svg><use href="#dimfast"/></svg></button><button aria-label="平行寸法"><svg><use href="#dimal"/></svg></button><button aria-label="長さ寸法"><svg><use href="#dimlin"/></svg></button><button aria-label="並列寸法"><svg><use href="#dimbase"/></svg></button><button aria-label="直列寸法"><svg><use href="#dimcont"/></svg></button><button aria-label="座標寸法"><svg><use href="#dimord"/></svg></button><i></i><button aria-label="中心マーク"><svg><use href="#center"/></svg></button><button aria-label="直径寸法"><svg><use href="#dimdia"/></svg></button><button aria-label="半径寸法"><svg><use href="#dimrad"/></svg></button><i></i><button aria-label="角度寸法"><svg><use href="#dimang"/></svg></button><button aria-label="弧長寸法"><svg><use href="#dimarc"/></svg></button><button aria-label="折り曲げ寸法"><svg><use href="#dimjog"/></svg></button><i></i><button aria-label="引出線"><svg><use href="#leader"/></svg></button><button aria-label="幾何公差"><svg><use href="#tol"/></svg></button><i></i><button aria-label="寸法編集"><svg><use href="#dimhand"/></svg></button><button aria-label="寸法文字編集"><svg><use href="#dimhandx"/></svg></button><button aria-label="寸法線傾斜"><svg><use href="#dimobl"/></svg></button><i></i><button aria-label="寸法スタイル"><svg><use href="#dimbrush"/></svg></button></div>
</div>

<main class="work">
<aside class="props">
  <div class="ptitle"><h2>プロパティ</h2><button aria-label="閉じる"><svg><use href="#x"/></svg></button></div>
  <div class="pbody">
    <div class="combo"><select aria-label="選択"><option>直径寸法 (1)</option></select><span class="drop"><svg><use href="#chev"/></svg></span></div>
    <div class="pbtns"><button aria-label="図形"><svg><use href="#shapes"/></svg></button><button aria-label="選択"><svg><use href="#cursor"/></svg></button><button aria-label="選択セット"><svg><use href="#selset"/></svg></button><button aria-label="スマート選択"><svg><use href="#selfast"/></svg></button><button aria-label="ヘルプ"><svg><use href="#help"/></svg></button></div>
    <div class="plist">
      <div class="pcontent">
        <div class="row"><svg><use href="#layers"/></svg><div class="combo"><select aria-label="画層"><option>A4図枠</option></select><span class="drop"><svg><use href="#chev"/></svg></span></div></div>
        <div class="row"><svg><use href="#paint"/></svg><div class="combo"><svg class="lead"><use href="#grey"/></svg><select class="p22" aria-label="線色"><option>Color 8</option></select><span class="drop"><svg><use href="#chev"/></svg></span></div></div>
        <div class="row"><svg><use href="#ltscale"/></svg><input class="field" aria-label="線種尺度" value="1"></div>
        <div class="row"><svg><use href="#weight"/></svg><div class="combo"><svg class="lead solid"><use href="#solid"/></svg><select class="p38" aria-label="線の太さ"><option>0.09 mm</option></select><span class="drop"><svg><use href="#chev"/></svg></span></div></div>
        <div class="row"><svg><use href="#ltype"/></svg><div class="combo"><select aria-label="線種"><option>中心線</option></select><svg class="dash"><use href="#dash"/></svg><span class="drop"><svg><use href="#chev"/></svg></span></div></div>
        <div class="row"><svg><use href="#checker"/></svg><input class="field" aria-label="透過性" value="ByLayer"></div>
        <div class="row"><svg><use href="#bars"/></svg><div class="combo off"><select aria-label="印刷スタイル" disabled><option></option></select><span class="drop"><svg><use href="#chev"/></svg></span></div></div>
        <div class="row"><svg><use href="#link"/></svg><input class="field sel" aria-label="関連" value="はい" readonly></div>
        <h3>その他<svg viewBox="0 0 10 6"><path d="M5 0l5 6H0z"/></svg></h3>
        <div class="group">
        <div class="row"><svg><use href="#dimbrush"/></svg><div class="combo"><svg class="lead"><use href="#sa"/></svg><select class="p22" aria-label="寸法スタイル"><option>寸法設定-1倍</option></select><span class="drop"><svg><use href="#chev"/></svg></span></div></div>
        <div class="row"><svg><use href="#biga"/></svg><div class="combo"><select aria-label="異尺度対応"><option>はい</option></select><span class="drop"><svg><use href="#chev"/></svg></span></div></div>
        <div class="row"><svg><use href="#aruler"/></svg><input class="field sel" aria-label="異尺度" value="1:1" readonly><button class="dots">...</button></div>
        </div>
        <h3>線分&amp;矢印<svg viewBox="0 0 10 6"><path d="M5 0l5 6H0z"/></svg></h3>
        <div class="group">
        <div class="row"><svg><use href="#center"/></svg><div class="combo"><select aria-label="中心マーク"><option>なし</option></select><span class="drop"><svg><use href="#chev"/></svg></span></div></div>
        <div class="row"><svg><use href="#dl1"/></svg><div class="combo"><select aria-label="寸法線1"><option>オン</option></select><span class="drop"><svg><use href="#chev"/></svg></span></div></div>
        <div class="row"><svg><use href="#dl2"/></svg><div class="combo"><select aria-label="寸法線2"><option>オン</option></select><span class="drop"><svg><use href="#chev"/></svg></span></div></div>
        <div class="row"><svg><use href="#arcol"/></svg><div class="combo"><svg class="lead"><use href="#grey"/></svg><select class="p22" aria-label="寸法線の色"><option>Color 8</option></select><span class="drop"><svg><use href="#chev"/></svg></span></div></div>
        <div class="row"><svg><use href="#artype"/></svg><div class="combo"><select aria-label="寸法線の線種"><option>実線2</option></select><span class="drop"><svg><use href="#chev"/></svg></span></div></div>
        <div class="row"><svg><use href="#arw"/></svg><div class="combo"><svg class="lead solid"><use href="#solid"/></svg><select class="p38" aria-label="寸法線の太さ"><option>0.09 mm</option></select><span class="drop"><svg><use href="#chev"/></svg></span></div></div>
        <div class="row"><svg><use href="#arhead"/></svg><div class="combo"><select aria-label="矢印"><option>閉じた塗潰</option></select><span class="drop"><svg><use href="#chev"/></svg></span></div></div>
        <div class="row"><svg><use href="#arsize"/></svg><input class="field" aria-label="矢印サイズ" value="5"></div>
        <div class="row"><svg><use href="#dl3"/></svg><div class="combo"><select aria-label="補助線1"><option>オン</option></select><span class="drop"><svg><use href="#chev"/></svg></span></div></div>
        </div>
      </div>
      <div class="vscroll pscroll"><svg class="up"><use href="#chevb"/></svg><span class="thumb"></span><svg><use href="#chevb"/></svg></div>
    </div>
  </div>
</aside>

<section class="doc">
  <div class="doctabs"><div class="doctab"><span>NONAME_0.dwg*</span><button aria-label="閉じる"><svg><use href="#x"/></svg></button></div><button class="plus" aria-label="追加"><svg viewBox="0 0 14 14"><path d="M1 7h12M7 1v12" stroke="#444" stroke-width="2"/></svg></button></div>
  <div class="stage">
    <div class="canvas">
      <svg class="drawing" viewBox="0 0 1070 539">
        <g fill="none" shape-rendering="crispEdges">
          <circle cx="148.500" cy="259.500" r="67.500" stroke="#0f0"/>
          <circle cx="573.500" cy="260.500" r="134.500" stroke="#0f0"/>
          <path d="M210 208L86 313" stroke="#909090"/>
          <path d="M675 171L471 350" stroke="#a0a0a0" stroke-dasharray="5 4"/>
        </g>
        <path d="M206 213l-9 3 4 4zM92 308l9-3-4-4z" fill="#909090"/>
        <text class="dim" x="73" y="323" transform="rotate(-42 73 323)">⌀100</text>
        <text class="annot" x="428" y="359">A</text>
        <path d="M441 343q5 3 5 17M439 348q3-8 6-1" fill="none" stroke="#4d7fa8"/>
        <path d="M448 353q3-8 7-3t-3 9M455 349q4-8 8-2t-4 7M450 361h12" fill="none" stroke="#177078" stroke-dasharray="2 1"/>
        <path d="M451 358l8-2" stroke="#0ff" stroke-width="2" stroke-dasharray="2 1"/>
        <path d="M424 366.500h41" stroke="#f01818"/><path d="M444.500 349v38" stroke="#aaa"/>
        <path d="M441.500 363.500h6v6h-6z" stroke="#fff" stroke-width="1.500" fill="#000"/>
        <g fill="#0000f0" stroke="#8a8ac0"><path d="M449.500 359.500h10v10h-10zM467.500 344.500h10v10h-10zM669.500 166.500h10v10h-10z"/><circle cx="466.500" cy="353.500" r="4.500"/><circle cx="679" cy="167" r="4.500"/></g>
        <g fill="none" stroke="#fff" shape-rendering="crispEdges"><path d="M45.500 485.500h9v8h-9zM50 427v58M55 488.500h57M106 484l8 4.500-8 5M46 435l4-9 4 9"/></g><path d="M49 488h2v2h-2z" fill="#fff"/>
        <text class="axis" x="45" y="422">Y</text><text class="axis" x="118" y="495">X</text>
      </svg>
      <div class="floats">
        <div class="float f1"><span>ファイル</span><button aria-label="新規"><svg><use href="#new"/></svg></button><button aria-label="開く"><svg><use href="#open"/></svg></button><button aria-label="保存"><svg><use href="#save"/></svg></button><button aria-label="別名保存"><svg><use href="#saveas"/></svg></button><button aria-label="やり直し"><svg><use href="#redo"/></svg></button><button aria-label="元に戻す"><svg><use href="#undo"/></svg></button><button class="fx" aria-label="閉じる"><svg><use href="#x"/></svg></button></div>
        <div class="float f2"><span>印刷</span><button aria-label="印刷"><svg><use href="#print"/></svg></button><button aria-label="印刷設定"><svg><use href="#printset"/></svg></button><button aria-label="プレビュー"><svg><use href="#preview"/></svg></button><button aria-label="シート"><svg><use href="#sheet"/></svg></button><button aria-label="シート設定"><svg><use href="#sheet2"/></svg></button><button aria-label="枠"><svg><use href="#frame"/></svg></button><button aria-label="画面移動"><svg><use href="#pan"/></svg></button><button class="fx" aria-label="閉じる"><svg><use href="#x"/></svg></button></div>
        <div class="float f3"><span>線選択</span><button class="green">外</button><button>中</button><button class="blue">隠</button><button class="yellow">想</button><button>細</button><button class="white">補</button><button>寸</button><button class="red">枠</button><button class="fx" aria-label="閉じる"><svg><use href="#x"/></svg></button></div>
        <div class="float f3"><span>線変更</span><button class="green">外</button><button>中</button><button class="blue">隠</button><button class="yellow">想</button><button>細</button><button class="white">補</button><button>寸</button><button class="red">枠</button><button class="fx" aria-label="閉じる"><svg><use href="#x"/></svg></button></div>
      </div>
      <section class="cmd">
        <header><svg viewBox="0 0 18 18"><path d="M3 0h4l4 5 0-4 6 11H3z" fill="#0c2"/><path d="M9 2l3-2 5 12H9z" fill="#11d"/><path d="M0 9h18v8H0z"/><text x="1" y="16" fill="#fff" font-family="Liberation Sans" font-weight="bold" font-size="7">2016</text></svg><h2>コマンド ウィンドウ</h2><button aria-label="閉じる"><svg viewBox="0 0 12 12"><path d="M1 1l10 10M11 1L1 11" stroke="#888"/></svg></button></header>
        <div class="log">
          <ol><li>«キャンセル»</li><li>«キャンセル»</li><li>«キャンセル»</li><li>«キャンセル»</li><li>«キャンセル»</li><li>«キャンセル»</li><li>«キャンセル»</li><li>«キャンセル»</li><li>«キャンセル»</li><li class="entry">._MAINSELECT</li></ol>
          <div class="vscroll cscroll"><svg class="up"><use href="#chevb"/></svg><span class="thumb"></span><svg><use href="#chevb"/></svg></div>
        </div>
        <label class="prompt">:<input aria-label="コマンド"></label>
      </section>
    </div>
    <div class="vscroll mscroll"><svg class="up"><use href="#chevb"/></svg><span class="thumb"></span><svg><use href="#chevb"/></svg></div>
  </div>
  <div class="sheets">
    <div class="stabs"><button class="on"><svg viewBox="0 0 60 13" preserveAspectRatio="none"><path d="M0 0q4 0 6 6t6 6h37q4 0 6-6t5-6"/></svg><span>モデル</span></button><button><svg viewBox="0 0 60 13" preserveAspectRatio="none"><path d="M0 0q4 0 6 6t6 6h37q4 0 6-6t5-6"/></svg><span>Sheet1</span></button><button><svg viewBox="0 0 60 13" preserveAspectRatio="none"><path d="M0 0q4 0 6 6t6 6h37q4 0 6-6t5-6"/></svg><span>シート1</span></button></div>
    <div class="hscroll"><svg class="left"><use href="#chevb"/></svg><span class="thumb"></span><svg class="right"><use href="#chevb"/></svg></div>
  </div>
</section>

<div class="draw"><button aria-label="線分"><svg><use href="#line"/></svg></button><button aria-label="無限長線分"><svg><use href="#xline"/></svg></button><button aria-label="ポリゴン"><svg><use href="#poly"/></svg></button><button aria-label="四角形"><svg><use href="#rect"/></svg></button><button aria-label="ポリライン"><svg><use href="#pline"/></svg></button><button aria-label="円弧"><svg><use href="#arc"/></svg></button><button aria-label="円"><svg><use href="#circ"/></svg></button><button aria-label="楕円"><svg><use href="#ellip"/></svg></button><button aria-label="楕円弧"><svg><use href="#earc"/></svg></button><button aria-label="スプライン"><svg><use href="#spline"/></svg></button><button aria-label="ハッチング"><svg><use href="#hatch"/></svg></button><button aria-label="注釈追加"><svg><use href="#aplus"/></svg></button><button aria-label="ノート編集"><svg><use href="#note"/></svg></button><button aria-label="注釈"><svg><use href="#atext"/></svg></button><button aria-label="分解"><svg><use href="#bomb"/></svg></button><button aria-label="マルチテキスト"><svg><use href="#mtext"/></svg></button><button aria-label="テキスト"><svg><use href="#stext"/></svg></button></div>
</main>

<footer class="status">
  <p>DraftSight 2016 x64</p>
  <div class="sgroup"><button>スナップ</button><button class="w40">グリッド</button><button class="w36">直交</button></div>
  <div class="sgroup"><button class="w48">円形状</button><button class="w48 on">Eスナップ</button><button class="w45">Eトラック</button></div>
  <div class="sgroup"><button class="w58">注釈<svg viewBox="0 0 8 5"><path d="M0 0h8L4 5z"/></svg></button><span>(1:1)</span></div>
  <output>(359.33,-643.14,0)</output>
</footer>
</div>
</body>
</html>
```

FILE: styles.css
```css
* { box-sizing: border-box; }
body { margin: 0; background: #f0f0f0; color: #000; font: 12px/16px "Liberation Sans", "Noto Sans CJK JP", sans-serif; font-feature-settings: "palt"; }
button { padding: 0; border: 0; background: none; color: inherit; font: inherit; font-feature-settings: inherit; display: flex; align-items: center; justify-content: center; white-space: nowrap; }
h1, h2, h3, p, ol { margin: 0; padding: 0; font-size: inherit; font-weight: normal; }
svg { display: block; flex: none; }
.defs { position: absolute; width: 0; height: 0; }
.app { min-height: 100vh; display: flex; flex-direction: column; }

.head { display: flex; height: 54px; background: linear-gradient(#f0f1f5, #e2e4e8); border-bottom: 1px solid #8a8c92; font-family: "Noto Sans", "Noto Sans CJK JP", sans-serif; font-size: 11px; }
.orb { width: 38px; height: 38px; margin: 8px 0 0 2px; }
.orb svg { width: 38px; height: 38px; }
.headmain { flex: 1; display: flex; flex-direction: column; }
.titlebar { display: grid; grid-template-columns: 158px 150px 1fr 108px; align-items: center; height: 28px; padding-left: 7px; }
.titlebar h1 { padding-left: 242px; }
.quick { display: flex; padding-left: 2px; }
.quick button { width: 23px; height: 20px; }
.quick svg { width: 18px; height: 18px; }
.quick .more { width: 16px; }
.quick .more svg { width: 8px; height: 10px; }
.winbtns, .docbtns { display: flex; justify-content: flex-end; }
.winbtns { gap: 24px; padding-right: 13px; }
.docbtns { gap: 6px; padding-right: 4px; align-items: center; }
.winbtns svg, .docbtns svg { width: 12px; height: 12px; }
.menurow { display: flex; justify-content: space-between; height: 25px; padding-left: 13px; }
.menu { display: flex; gap: 17px; padding-top: 8px; }

.combo { display: grid; grid-template-columns: 1fr 17px; height: 20px; border: 1px solid #9a9a9a; background: #fff; min-width: 0; }
.combo > * { grid-row: 1; }
.combo select { grid-column: 1 / -1; appearance: none; width: 100%; height: 18px; border: 0; border-radius: 0; background: none; color: #000; font: inherit; font-feature-settings: inherit; padding: 0 17px 0 2px; }
.combo .p20 { padding-left: 20px; }
.combo .p22 { padding-left: 22px; }
.combo .p38 { padding-left: 38px; }
.combo .p86 { padding-left: 86px; }
.drop { grid-column: 2; display: flex; align-items: center; justify-content: center; background: #e1e1e1; border: 1px solid #b0b0b0; color: #444; pointer-events: none; }
.drop svg { width: 10px; height: 10px; }
.lead { grid-column: 1; align-self: center; width: 12px; height: 12px; margin-left: 5px; pointer-events: none; }
.lead.solid { width: 32px; height: 4px; margin-left: 3px; }
.states { display: flex; gap: 4px; height: 16px; margin-left: 2px; }
.states svg { width: 16px; height: 16px; }
.dash { grid-column: 1; align-self: end; width: 52px; height: 4px; margin: 0 0 2px 46px; pointer-events: none; }
.off { background: #f0f0f0; border-color: #a9c4e2; }
.off .drop { color: #aaa; }
.workspace { width: 158px; }

.bar { display: flex; align-items: center; height: 31px; padding-left: 2px; border-bottom: 1px solid #9b9b9b; border-top: 1px solid #fff; }
.second { height: 30px; }
.icons { display: flex; align-items: center; }
.icons button { width: 27px; height: 26px; }
.icons svg { width: 19px; height: 19px; }
.icons i { width: 5px; height: 22px; background: linear-gradient(#8c8c8c, #8c8c8c) center / 1px 100% no-repeat; }
.dims i { width: 6px; }
.style { width: 131px; margin-right: 1px; }
.layer { width: 299px; }
.prop { width: 132px; }
.vsep { width: 1px; height: 24px; margin: 0 3px 0 1px; background: #999; }
.thin { margin: 0 1px 0 1px; }

.work { flex: 1; display: flex; }
.props { width: 250px; display: flex; flex-direction: column; border-right: 3px solid #f7f7fa; padding: 1px 0 0 1px; }
.ptitle { display: flex; align-items: center; justify-content: space-between; height: 22px; margin-right: 1px; padding: 0 5px 0 3px; background: #dfe3ff; border: 1px solid #8a94ac; box-shadow: inset 0 0 0 1px #fff; }
.ptitle h2 { font-weight: bold; font-size: 11px; }
.ptitle svg { width: 10px; height: 10px; }
.pbody { padding: 11px 10px 10px; flex: 1; display: flex; flex-direction: column; }
.pbody > .combo { height: 21px; }
.pbtns { display: flex; gap: 8px; padding: 6px 0 7px 1px; }
.pbtns button { width: 21px; height: 20px; border: 1px solid #adadad; background: #e4e4e4; }
.pbtns svg { width: 18px; height: 18px; }
.plist { flex: 1; display: flex; justify-content: space-between; width: 225px; border: 1px solid #8a8a8a; }
.pcontent { width: 188px; margin: -1px 0 0 9px; border-left: 1px solid #d5d5d5; }
.row { display: flex; align-items: center; height: 22px; gap: 10px; padding-left: 10px; }
.row > svg { width: 18px; height: 18px; }
.row .combo, .field { flex: 1; }
.field { min-width: 0; height: 20px; border: 1px solid #9a9a9a; background: #fff; padding: 0 2px; font: inherit; font-feature-settings: inherit; }
.sel { background: #b1ceed; }
.dots { width: 17px; height: 18px; margin-left: -6px; border: 1px solid #adadad; background: #e4e4e4; }
.pcontent h3 { display: flex; align-items: center; justify-content: space-between; height: 18px; padding: 0 5px; border: 1px solid #8a94ac; background: #dfe3ff; font-weight: bold; }
.pcontent h3 svg { width: 10px; height: 6px; }
.group { padding-top: 4px; }

.vscroll { display: grid; justify-items: center; background: #f0f0f0; }
.vscroll svg, .hscroll svg { width: 10px; height: 10px; }
.vscroll .up { transform: rotate(180deg); }
.thumb { background: #cdcdcd; }
.vscroll .thumb { width: 100%; }
.pscroll { width: 16px; grid-template-rows: 25px 115px 1fr; padding: 4px 0; border-left: 1px solid #fff; }
.pscroll > :last-child, .mscroll > :last-child, .cscroll > :last-child { align-self: end; }

.doc { flex: 1; min-width: 0; display: flex; flex-direction: column; border-left: 1px solid #666; }
.doctabs { display: flex; height: 30px; background: linear-gradient(#ededf2 23px, #8a8a90 23px 24px, #fff 24px 27px, #85858c 27px); border-top: 1px solid #8a8a90; border-right: 2px solid #85858c; }
.doctab { display: flex; align-items: center; justify-content: space-between; width: 178px; height: 26px; padding: 0 14px 2px 37px; background: #fff; }
.doctab svg { width: 11px; height: 11px; color: #333; }
.plus { width: 27px; height: 23px; border: 1px solid #999; background: #e1e1e1; }
.plus svg { width: 14px; height: 14px; }
.stage { flex: 1; display: flex; }
.canvas { flex: 1; position: relative; background: #000; min-width: 0; }
.drawing { position: absolute; left: 0; top: 0; width: 1070px; height: 539px; }
.dim { fill: #0ff; font-size: 9px; font-weight: bold; }
.annot { fill: #5580b0; font-size: 20px; }
.axis { fill: #fff; font-size: 16px; }
.floats { position: relative; display: flex; gap: 13px; padding-top: 10px; }
.float { display: flex; align-items: center; height: 30px; padding-left: 8px; background: #f0f0f0; border: 1px solid #fff; }
.float span { width: 43px; white-space: nowrap; }
.f1 span { font-size: 11px; }
.f2 span { width: 32px; }
.f3 span { width: 44px; }
.float button { width: 27px; height: 26px; color: #444; font: bold 16px/20px "Noto Sans CJK JP", sans-serif; }
.float svg { width: 18px; height: 18px; }
.float .fx { width: 11px; height: 18px; align-self: flex-start; }
.float .fx svg { width: 6px; height: 6px; }
.float .green { color: #0f0; }
.float .blue { color: #00c; }
.float .yellow { color: #ff0; }
.float .white { color: #fff; }
.float .red { color: #f00; }

.cmd { position: absolute; right: 1px; bottom: 23px; width: 345px; background: #fff; border: 1px solid #777; }
.cmd header { display: flex; align-items: center; height: 31px; padding: 0 9px 0 6px; gap: 5px; color: #999; border-bottom: 1px solid #777; }
.cmd header > svg { width: 18px; height: 18px; }
.cmd h2 { flex: 1; font-size: 10px; }
.cmd header button svg { width: 12px; height: 12px; }
.log { display: flex; justify-content: space-between; height: 163px; border-bottom: 1px solid #777; }
.log ol { list-style: none; }
.log li::before { content: ":"; color: #3366bb; display: inline-block; width: 8px; }
.log li { padding-left: 5px; font-size: 12px; }
.log .entry { font-size: 13px; }
.cscroll { width: 16px; grid-template-rows: 131px 13px 1fr; padding: 4px 0; }
.prompt { display: flex; height: 16px; padding-left: 5px; }
.prompt input { flex: 1; border: 0; padding: 0; outline: 0; }

.mscroll { width: 14px; grid-template-rows: 259px 14px 1fr; padding: 4px 0; }
.sheets { display: flex; justify-content: space-between; height: 14px; }
.stabs { display: flex; padding-left: 1px; font-size: 11px; }
.stabs button { position: relative; width: 59px; height: 13px; }
.stabs .on { width: 51px; }
.stabs svg { position: absolute; inset: 0; width: 100%; height: 100%; fill: #c8c8c8; stroke: #222; }
.stabs .on svg { fill: #fff; }
.stabs span { position: relative; line-height: 12px; }
.hscroll { display: grid; grid-template-columns: 166px 13px 165px; align-items: center; margin-right: 16px; }
.hscroll .thumb { height: 12px; }
.hscroll .left { transform: rotate(90deg); }
.hscroll .right { transform: rotate(-90deg); justify-self: end; }

.draw { width: 30px; display: flex; flex-direction: column; align-items: center; padding: 2px 2px 0 0; margin-left: 1px; border-left: 1px solid #fff; border-bottom: 1px solid #aaa; }
.draw button { width: 26px; height: 26px; }
.draw svg { width: 18px; height: 18px; }

.status { display: flex; align-items: center; height: 30px; padding-left: 3px; font-family: "Noto Sans", "Noto Sans CJK JP", sans-serif; font-size: 11px; }
.status p { width: 480px; }
.sgroup { display: flex; gap: 7px; align-items: center; height: 26px; padding: 0 4px; margin-right: 1px; border: 1px solid #dcdcdc; white-space: nowrap; }
.sgroup button { width: 44px; height: 20px; background: #e1e1e1; border: 1px solid #adadad; gap: 14px; }
.sgroup svg { width: 8px; height: 5px; }
.sgroup .w36 { width: 36px; }
.sgroup .w40 { width: 40px; }
.sgroup .w45 { width: 45px; }
.sgroup .w48 { width: 48px; }
.sgroup .w58 { width: 58px; }
.sgroup .on { background: #cce8ff; border-color: #26577f; }
.status output { padding-left: 2px; }
```
